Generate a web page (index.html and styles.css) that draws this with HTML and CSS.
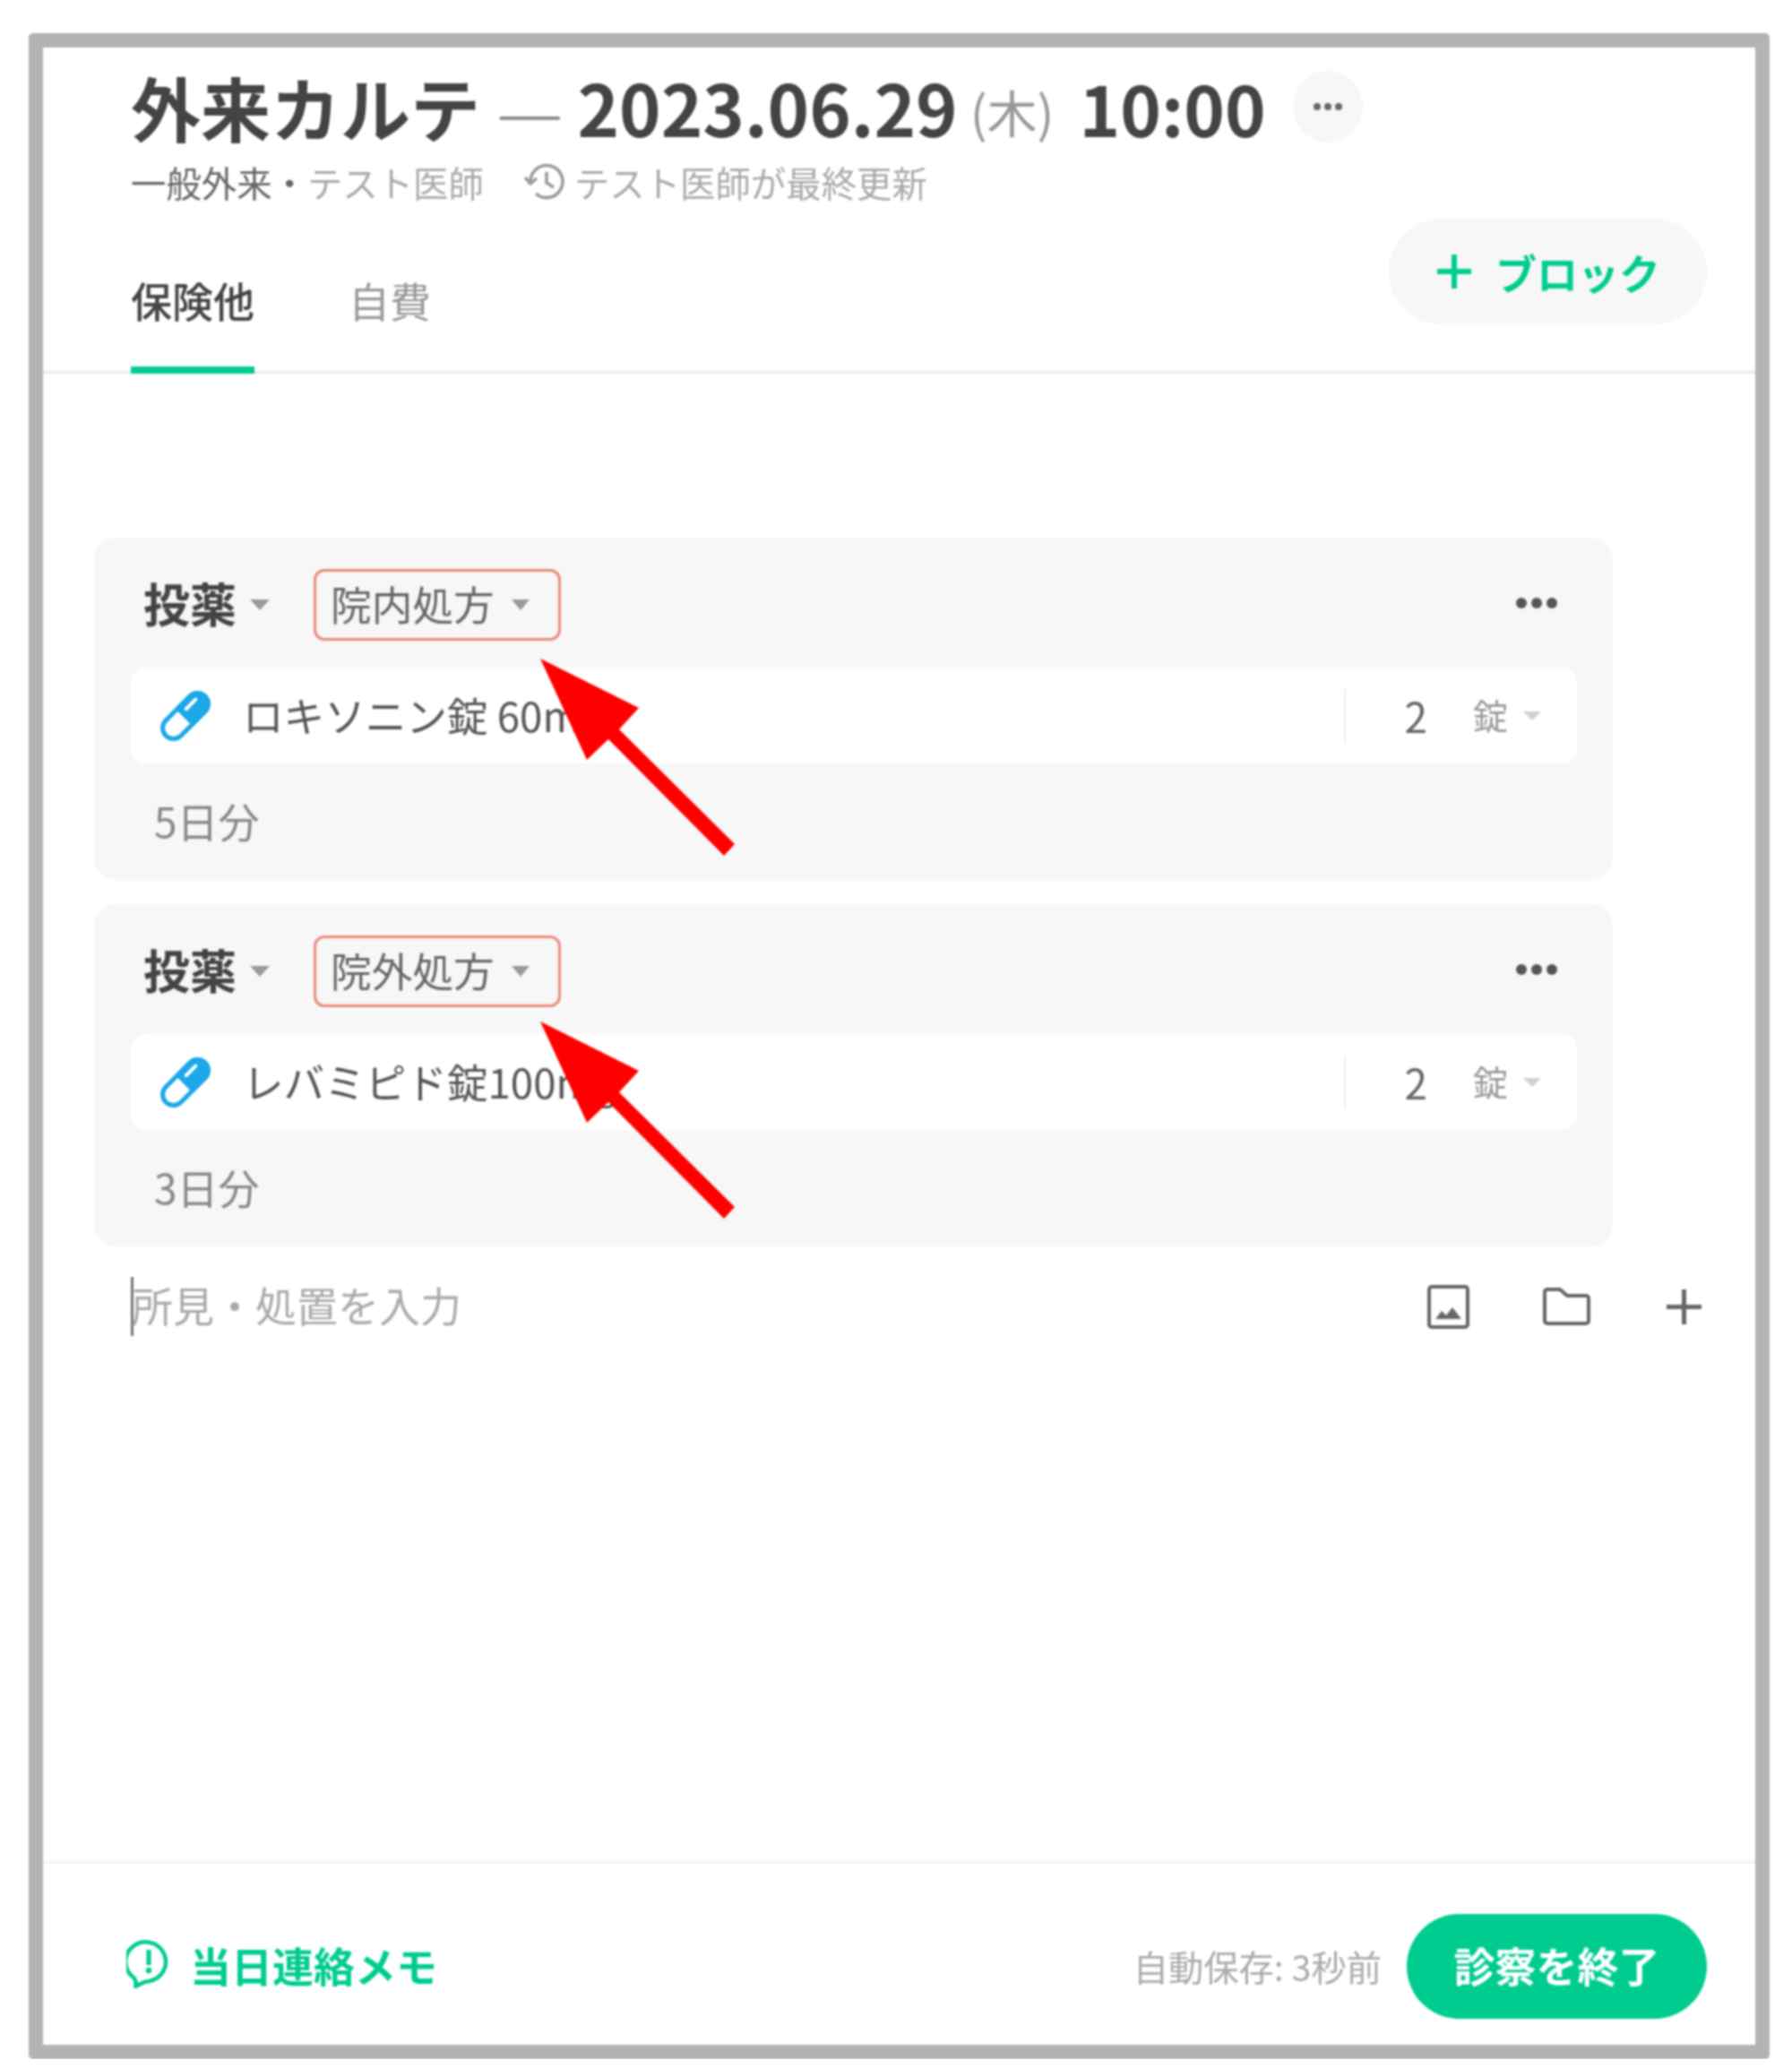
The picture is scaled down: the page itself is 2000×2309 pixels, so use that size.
FILE: index.html
```html
<!DOCTYPE html>
<html lang="ja">
<head>
<meta charset="utf-8">
<title>外来カルテ</title>
<link rel="stylesheet" href="styles.css">
</head>
<body>
<svg class="defs" width="0" height="0" aria-hidden="true">
  <symbol id="pill" viewBox="0 0 56 56">
    <g transform="rotate(-45 28 28)">
      <rect x="-3" y="16" width="62" height="24" rx="12" fill="#fff" stroke="#1ba7e8" stroke-width="5"/>
      <path d="M28 16H47a12 12 0 0 1 0 24H28z" fill="#1ba7e8" stroke="#1ba7e8" stroke-width="5" stroke-linejoin="round"/>
      <path d="M34 23H49" stroke="#fff" stroke-width="4" stroke-linecap="round" fill="none"/>
    </g>
  </symbol>
  <symbol id="arrow" viewBox="0 0 240 240">
    <path d="M3 2 113 57 91 81 220 209 208 222 79 92 55 115z" fill="#ff0000"/>
  </symbol>
</svg>

<main class="frame">
  <header class="head">
    <div class="title-row">
      <h1 class="title">外来カルテ<span class="dash">—</span><span class="date">2023.06.29</span><span class="dow">(木)</span><span class="time">10:00</span></h1>
      <span class="round-more"><i></i><i></i><i></i></span>
    </div>
    <div class="sub-row">
      <span class="sub-dept">一般外来・</span><span class="sub-doc">テスト医師</span>
      <svg class="history" viewBox="0 0 46 44" fill="none" stroke="#999" stroke-width="3.5">
        <path d="M7 22a18 18 0 1 1 6 13"/>
        <path d="M1 17l6 7 7-6" stroke-linejoin="round"/>
        <path d="M25 11v12l8 5"/>
      </svg>
      <span class="sub-doc">テスト医師が最終更新</span>
    </div>
    <div class="tabs-row">
      <nav class="tabs">
        <a class="tab tab-active">保険他</a>
        <a class="tab">自費</a>
      </nav>
      <button class="add-block">
        <svg class="add-plus" viewBox="0 0 38 38"><path d="M19 0V38M0 19H38" stroke="#00cc90" stroke-width="6"/></svg>
        <span>ブロック</span>
      </button>
    </div>
  </header>

  <section class="cards">
    <article class="card">
      <div class="card-head">
        <span class="kind">投薬</span><span class="caret"></span>
        <span class="tag"><span class="tag-label">院内処方</span><span class="caret caret-tag"></span></span>
        <span class="more"><i></i><i></i><i></i></span>
      </div>
      <div class="drug">
        <svg class="pill"><use href="#pill"/></svg>
        <span class="drug-name">ロキソニン錠 60mg</span>
        <span class="sep"></span>
        <span class="qty">2</span>
        <span class="unit">錠</span>
        <span class="caret caret-unit"></span>
      </div>
      <p class="days">5日分</p>
      <svg class="pointer"><use href="#arrow"/></svg>
    </article>
    <article class="card">
      <div class="card-head">
        <span class="kind">投薬</span><span class="caret"></span>
        <span class="tag"><span class="tag-label">院外処方</span><span class="caret caret-tag"></span></span>
        <span class="more"><i></i><i></i><i></i></span>
      </div>
      <div class="drug">
        <svg class="pill"><use href="#pill"/></svg>
        <span class="drug-name">レバミピド錠100mg</span>
        <span class="sep"></span>
        <span class="qty">2</span>
        <span class="unit">錠</span>
        <span class="caret caret-unit"></span>
      </div>
      <p class="days">3日分</p>
      <svg class="pointer pointer-second"><use href="#arrow"/></svg>
    </article>
  </section>

  <div class="composer">
    <span class="cursor"></span>
    <span class="placeholder">所見・処置を入力</span>
    <svg class="ic-image" viewBox="0 0 47 49" fill="none">
      <rect x="2" y="2" width="43" height="45" rx="3" stroke="#666" stroke-width="4"/>
      <path d="M9 38l7-9 5 5 7-9 10 13z" fill="#666"/>
    </svg>
    <svg class="ic-folder" viewBox="0 0 53 42" fill="none">
      <path d="M2 5a3 3 0 0 1 3-3H19l8 7H48a3 3 0 0 1 3 3V37a3 3 0 0 1-3 3H5a3 3 0 0 1-3-3z" stroke="#666" stroke-width="4" stroke-linejoin="round"/>
    </svg>
    <svg class="ic-plus" viewBox="0 0 39 39"><path d="M19.5 0V39M0 19.5H39" stroke="#666" stroke-width="5"/></svg>
  </div>

  <footer class="foot">
    <a class="memo">
      <svg class="ic-memo" viewBox="0 0 49 55" fill="none" preserveAspectRatio="none">
        <path d="M10 53c1-5 0-8-2-10A22 22 0 1 1 25 47c-5 0-10 3-15 6z" stroke="#00cc90" stroke-width="4.500" stroke-linejoin="round"/>
        <path d="M24.500 12V29" stroke="#00cc90" stroke-width="5"/>
        <circle cx="24.500" cy="35" r="3.200" fill="#00cc90"/>
      </svg>
      <span class="memo-label">当日連絡メモ</span>
    </a>
    <span class="autosave">自動保存: 3秒前</span>
    <button class="finish">診察を終了</button>
  </footer>
</main>
</body>
</html>
```
FILE: styles.css
```css
* { box-sizing: border-box; }
html, body { margin: 0; padding: 0; background: #fff; }
body {
  font-family: "Noto Sans CJK JP", "Noto Sans", sans-serif;
  color: #444;
  padding: 37px 0 0 32px;
}
.defs { position: absolute; }

.frame {
  width: 1943px;
  height: 2261px;
  border: 16px solid #b3b3b3;
  border-radius: 5px;
  display: flex;
  flex-direction: column;
  background: #fff;
  filter: blur(1px);
}

/* header */
.head { flex: none; height: 364px; display: flex; flex-direction: column; }
.title-row {
  display: flex;
  align-items: center;
  padding: 14px 0 0 98px;
  height: 118px;
}
.title {
  margin: 0;
  font-size: 78px;
  line-height: 100px;
  font-weight: 700;
  color: #444;
  white-space: nowrap;
  display: flex;
  align-items: center;
}
.dash { font-weight: 300; font-size: 84px; color: #888; margin: 0 16px 0 18px; }
.date { font-size: 79px; }
.dow { font-size: 56px; font-weight: 400; color: #999; margin: 10px 28px 0 14px; }
.time { font-size: 77.500px; }
.round-more {
  width: 78px;
  height: 80px;
  border-radius: 50%;
  background: #f7f7f7;
  margin: 0 0 0 30px;
  display: flex;
  align-items: center;
  justify-content: center;
  gap: 4px;
}
.round-more i { width: 8px; height: 8px; border-radius: 50%; background: #666; }

.sub-row {
  display: flex;
  align-items: center;
  height: 50px;
  margin-top: 7px;
  padding-left: 98px;
  font-size: 39.400px;
  line-height: 50px;
  color: #aaa;
  white-space: nowrap;
}
.sub-dept { color: #666; }
.sub-doc { color: #aaa; }
.history { width: 46px; height: 44px; margin: 0 10px 0 45px; }

.tabs-row {
  flex: 1;
  display: flex;
  justify-content: space-between;
  align-items: flex-start;
  margin-top: 16px;
  padding: 0 54px 0 98px;
  border-bottom: 3px solid #e8e8e8;
}
.tabs { align-self: flex-end; display: flex; gap: 105px; margin-bottom: -3px; }
.tab {
  display: block;
  font-size: 46px;
  line-height: 60px;
  padding-bottom: 45px;
  border-bottom: 8px solid transparent;
  color: #999;
}
.tab-active { color: #444; border-bottom-color: #00cc90; font-weight: 500; }

.add-block {
  width: 355px;
  height: 118px;
  border: 0;
  border-radius: 59px;
  background: #f7f7f7;
  color: #00cc90;
  font: 700 46px/60px "Noto Sans CJK JP", sans-serif;
  display: flex;
  align-items: center;
  padding: 0 0 0 54px;
  gap: 27px;
}
.add-plus { width: 38px; height: 38px; flex: none; }

/* cards */
.cards {
  flex: none;
  margin: 183px 0 0 57px;
  width: 1695px;
  display: flex;
  flex-direction: column;
  gap: 27px;
}
.card {
  position: relative;
  height: 382px;
  background: #f7f7f7;
  border-radius: 24px;
  padding-top: 35px;
}
.card-head {
  display: flex;
  align-items: center;
  height: 80px;
  padding: 0 62px 0 55px;
}
.kind { font-size: 52px; line-height: 70px; font-weight: 700; color: #444; margin-top: -4px; }
.caret {
  width: 0;
  height: 0;
  border-left: 11px solid transparent;
  border-right: 11px solid transparent;
  border-top: 12px solid #999;
  margin-left: 15px;
  flex: none;
}
.tag {
  display: flex;
  align-items: center;
  width: 276px;
  height: 80px;
  margin-left: 49px;
  padding-left: 16px;
  border: 3px solid #ea8a78;
  border-radius: 12px;
  font-size: 45.700px;
  line-height: 60px;
  color: #666;
}
.tag-label { margin-top: -4px; }
.caret-tag { border-left-width: 10px; border-right-width: 10px; margin-left: 19px; }
.more { margin-left: auto; display: flex; gap: 5px; margin-top: -4px; }
.more i { width: 12px; height: 12px; border-radius: 50%; background: #555; }

.drug {
  display: flex;
  align-items: center;
  height: 107px;
  margin: 30px 40px 0 41px;
  padding: 0 40px 0 33px;
  background: #fff;
  border-radius: 16px;
}
.pill { width: 56px; height: 56px; flex: none; }
.drug-name {
  flex: 1;
  margin-left: 36px;
  font-size: 45.600px;
  line-height: 60px;
  color: #555;
  white-space: nowrap;
  margin-top: -4px;
}
.sep { width: 2px; height: 60px; background: #eee; flex: none; }
.qty { margin-left: 65px; font-size: 46px; line-height: 60px; color: #666; margin-top: -2px; }
.unit { margin-left: 51px; font-size: 39px; line-height: 60px; color: #999; margin-top: -4px; }
.caret-unit {
  border-left-width: 10px;
  border-right-width: 10px;
  border-top: 10px solid #d0d0d0;
  margin-left: 17px;
}
.days {
  margin: 33px 0 0 67px;
  font-size: 46px;
  line-height: 60px;
  color: #888;
}
.pointer {
  position: absolute;
  left: 495px;
  top: 133px;
  width: 240px;
  height: 240px;
}
.pointer-second { top: 129px; }

/* composer */
.composer {
  flex: none;
  display: flex;
  align-items: center;
  height: 80px;
  margin-top: 27px;
  padding: 0 60px 0 98px;
}
.cursor { width: 3px; height: 66px; background: #777; flex: none; }
.placeholder { flex: 1; font-size: 46px; line-height: 60px; color: #aaa; margin: -6px 0 0 -2px; }
.ic-image { width: 47px; height: 49px; flex: none; }
.ic-folder { width: 53px; height: 42px; margin-left: 82px; flex: none; }
.ic-plus { width: 39px; height: 39px; margin-left: 85px; flex: none; }

/* footer */
.foot {
  flex: 1;
  margin-top: auto;
  max-height: 205px;
  display: flex;
  align-items: center;
  padding: 27px 54px 0 93px;
  border-top: 3px solid #f2f2f2;
}
.memo {
  display: flex;
  align-items: center;
  gap: 19px;
  flex: 1;
  font-size: 46px;
  font-weight: 700;
  line-height: 60px;
  color: #00cc90;
}
.memo-label { margin-top: -5px; }
.ic-memo { width: 50px; height: 55px; flex: none; margin-top: -6px; margin-right: 2px; }
.autosave { font-size: 39.300px; line-height: 60px; color: #aaa; margin: -2px 28px 0 0; }
.finish {
  width: 335px;
  height: 117px;
  border: 0;
  border-radius: 59px;
  background: #00cc90;
  color: #fff;
  font: 700 46px/60px "Noto Sans CJK JP", sans-serif;
  padding: 0 0 5px;
}
```
